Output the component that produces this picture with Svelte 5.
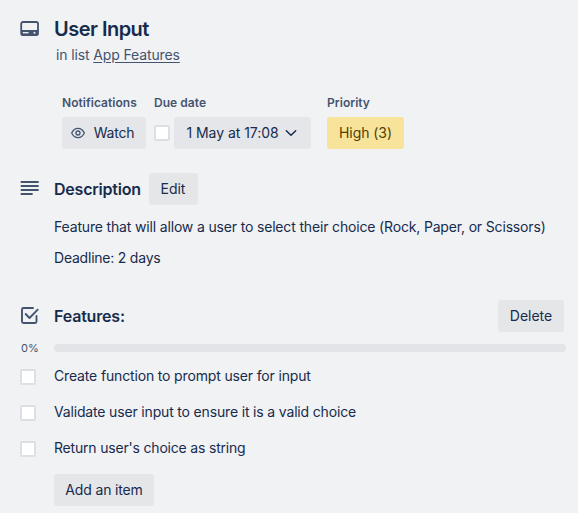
<script>
  const items = [
    { text: 'Create function to prompt user for input', spacing: -0.155 },
    { text: 'Validate user input to ensure it is a valid choice', spacing: -0.165 },
    { text: "Return user's choice as string", spacing: -0.19 }
  ];
</script>

<main class="card">
  <header class="row head">
    <svg class="icon card-icon" width="20" height="16" viewBox="0 0 20 16">
      <rect x="1.200" y="1" width="16.800" height="13" rx="1.800" fill="none" stroke="#44546f" stroke-width="1.800" />
      <path d="M1 9h17v4a1.500 1.500 0 0 1-1.500 1.500H2.500A1.500 1.500 0 0 1 1 13z" fill="#44546f" />
      <path d="M2.800 11.700h5.800" stroke="#f1f2f4" stroke-width="1.300" />
      <circle cx="14.500" cy="11.700" r="1" fill="#f1f2f4" />
    </svg>
    <div>
      <h1><span>User Input</span></h1>
      <p class="list"><span>in list <a href="#list">App Features</a></span></p>
    </div>
  </header>

  <section class="meta">
    <div class="field notify">
      <h3><span>Notifications</span></h3>
      <button class="btn watch">
        <svg width="16" height="16" viewBox="0 0 16 16" fill="none" stroke="#44546f" stroke-width="1.300">
          <path d="M1.700 8C3.200 4.700 5.300 3.300 8 3.300S12.800 4.700 14.300 8C12.800 11.300 10.700 12.700 8 12.700S3.200 11.300 1.700 8z" />
          <circle cx="8" cy="8" r="2" />
        </svg>
        <span>Watch</span>
      </button>
    </div>
    <div class="field due">
      <h3><span>Due date</span></h3>
      <div class="due-line">
        <i class="check"></i>
        <button class="btn date">
          <span>1 May at 17:08</span>
          <svg width="12" height="8" viewBox="0 0 12 8" fill="none" stroke="#172b4d" stroke-width="1.500" stroke-linecap="round" stroke-linejoin="round">
            <path d="M1.300 1.700 6 6.200l4.700-4.500" />
          </svg>
        </button>
      </div>
    </div>
    <div class="field">
      <h3><span>Priority</span></h3>
      <button class="btn high"><span>High (3)</span></button>
    </div>
  </section>

  <section class="row description">
    <svg class="icon lines" width="20" height="16" viewBox="0 0 20 16" stroke="#44546f" stroke-width="1.800" stroke-linecap="round">
      <path d="M1.400 2h16.600M1.400 6h16.600M1.400 10h16.600M1.400 14h10.600" />
    </svg>
    <div>
      <div class="bar"><h2 class="desc-title"><span>Description</span></h2><button class="btn edit"><span>Edit</span></button></div>
      <p class="feature"><span>Feature that will allow a user to select their choice (Rock, Paper, or Scissors)</span></p>
      <p class="deadline"><span>Deadline: 2 days</span></p>
    </div>
  </section>

  <section class="features">
    <div class="row">
      <svg class="icon tick" width="20" height="20" viewBox="0 0 20 20" fill="none" stroke="#44546f" stroke-width="1.900" stroke-linecap="round" stroke-linejoin="round">
        <path d="M13 2H3.500A1.500 1.500 0 0 0 2 3.500v12A1.500 1.500 0 0 0 3.500 17h11.500a1.500 1.500 0 0 0 1.500-1.500V10" />
        <path d="M5.700 8 9.500 12 17.700 3.700" />
      </svg>
      <div class="bar spread"><h2 class="feat-title"><span>Features:</span></h2><button class="btn delete"><span>Delete</span></button></div>
    </div>
    <div class="row progress"><small><span>0%</span></small><div class="track"></div></div>
    <ul>
      {#each items as item}
        <li class="row"><i class="check"></i><span style="letter-spacing: {item.spacing}px">{item.text}</span></li>
      {/each}
    </ul>
    <button class="btn add"><span>Add an item</span></button>
  </section>
</main>

<style>
  :global(body) { background: #f1f2f4; }
  .card { box-sizing: border-box; width: 578px; height: 513px; padding: 17px 12px 0 20px; overflow: hidden; background: #f1f2f4; color: #172b4d; font: 14px/20px Inter, "Liberation Sans", sans-serif; white-space: nowrap; }
  h1, h2, h3, p, ul { margin: 0; padding: 0; list-style: none; }
  .row { display: grid; grid-template-columns: 34px 1fr; align-items: start; }
  .icon { display: block; }
  .head { height: 78px; }
  .card-icon { margin-top: 4px; }
  h1 { font-size: 20px; line-height: 24px; font-weight: 600; letter-spacing: -0.52px; }
  h2 { font-size: 16px; line-height: 20px; font-weight: 600; }
  h3 { font-size: 12px; line-height: 16px; font-weight: 600; letter-spacing: 0.04px; color: #44546f; margin-bottom: 6px; }
  .list { margin: 4px 0 0 2px; color: #44546f; letter-spacing: -0.13px; }
  .list a { color: inherit; text-decoration: underline; text-underline-offset: 2px; }
  .meta { display: flex; padding-left: 42px; height: 78px; }
  .notify { width: 92px; }
  .due { width: 173px; }
  .due-line { display: flex; align-items: center; gap: 4px; }
  .btn { box-sizing: border-box; display: flex; align-items: center; justify-content: center; height: 32px; padding: 0; border: 0; border-radius: 3px; background: #e4e6ea; color: #172b4d; font: inherit; }
  .watch { width: 84px; gap: 8px; padding-right: 4px; letter-spacing: -0.2px; }
  .watch svg { flex: none; }
  .date { width: 137px; gap: 6px; padding-right: 2px; letter-spacing: -0.04px; }
  .high { width: 77px; background: #f8e39b; color: #533f04; letter-spacing: -0.05px; }
  .check { box-sizing: border-box; flex: none; display: block; width: 16px; height: 16px; border: 2px solid #dcdfe4; border-radius: 2px; background: #fff; }
  .description { height: 127px; }
  .bar { display: flex; align-items: center; height: 32px; }
  .spread { justify-content: space-between; padding-right: 2px; }
  .lines { margin-top: 7px; }
  .desc-title { width: 95px; letter-spacing: -0.22px; }
  .feat-title { letter-spacing: -0.18px; }
  .edit { width: 49px; padding-right: 1px; letter-spacing: -0.05px; background: #e4e6e8; }
  .feature { margin-top: 12px; letter-spacing: -0.163px; }
  .deadline { margin-top: 11px; letter-spacing: -0.22px; }
  .tick { margin-top: 6px; }
  .delete { width: 66px; background: #e4e6e8; }
  .progress { box-sizing: border-box; height: 34px; align-items: center; padding-bottom: 2px; }
  .progress small { font-size: 11px; line-height: 14px; color: #44546f; padding-left: 1px; }
  .track { height: 8px; border-radius: 4px; background: #e3e4e8; }
  li { height: 36px; }
  li .check { margin-top: 3px; }
  .add { width: 100px; margin-left: 34px; letter-spacing: -0.15px; background: #e4e6e8; }
</style>
